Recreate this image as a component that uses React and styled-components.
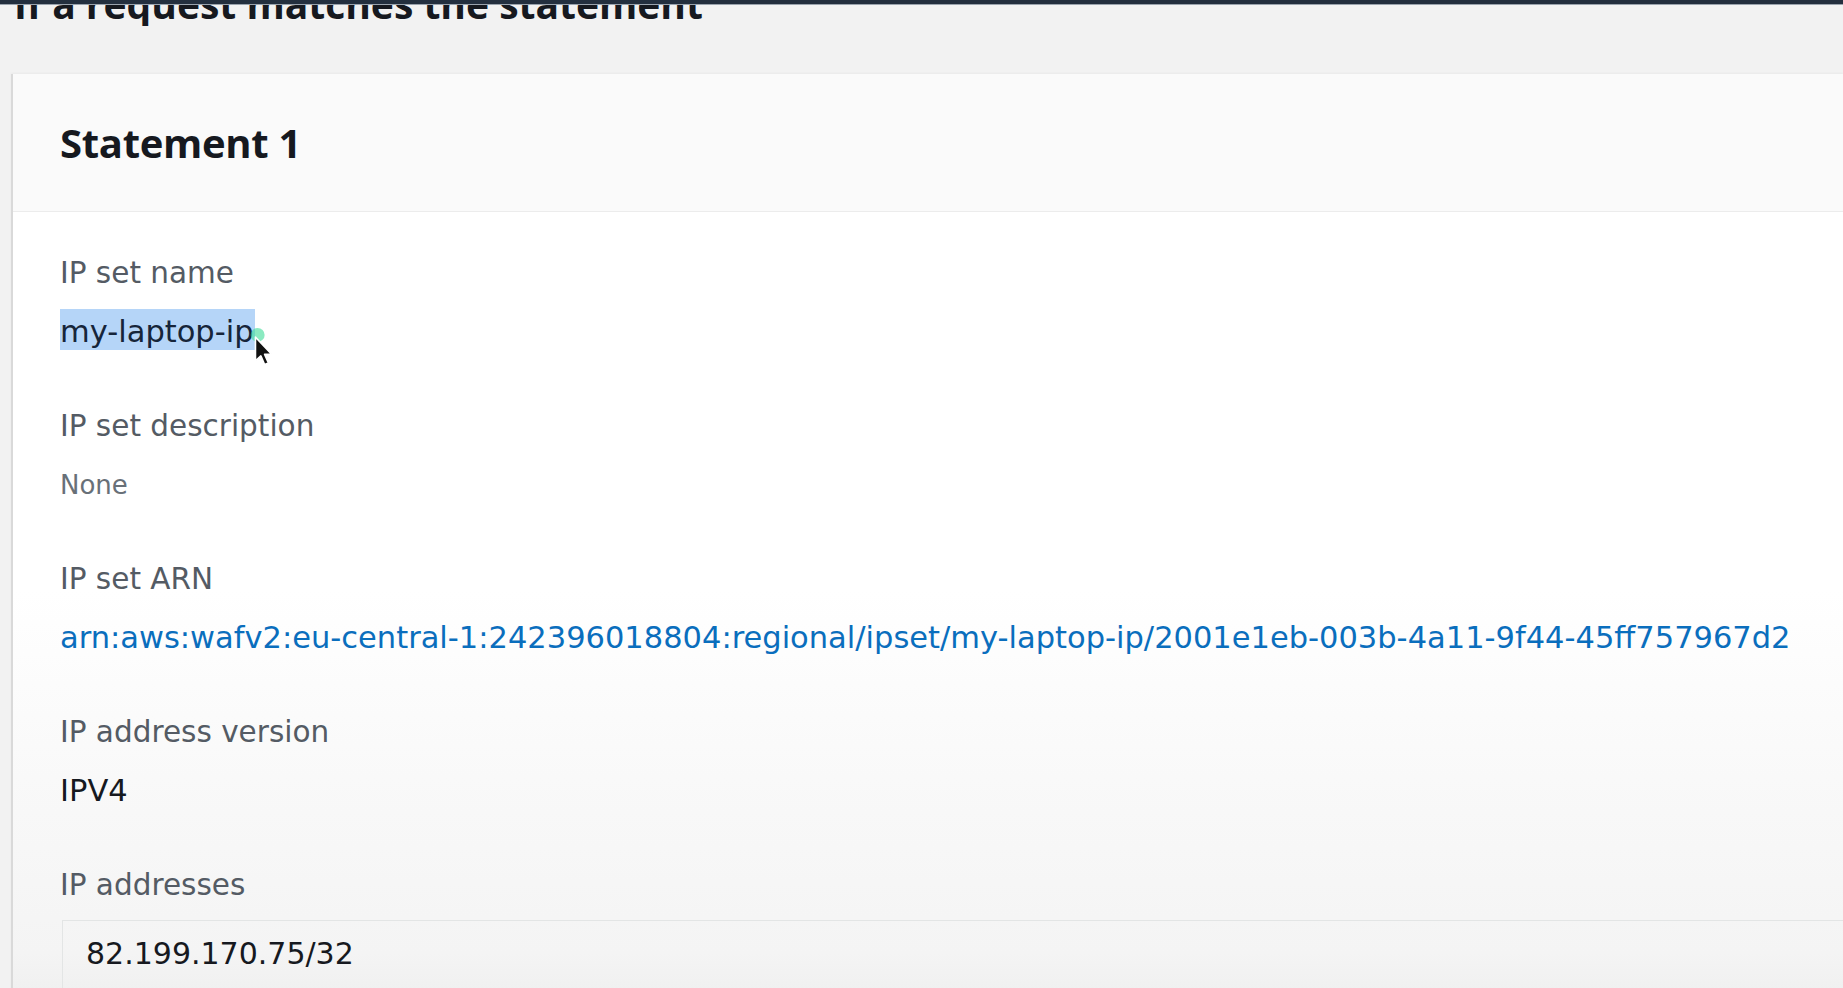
import React from "react";
import styled, { createGlobalStyle } from "styled-components";

const GlobalStyle = createGlobalStyle`
  html, body {
    margin: 0;
    padding: 0;
    background: #f2f2f2;
  }
  body {
    font-family: "DejaVu Sans", "Open Sans", sans-serif;
    color: #16191f;
  }
`;

const fields = [
  { label: "IP set name", value: "my-laptop-ip", kind: "selected" },
  { label: "IP set description", value: "None", kind: "muted" },
  {
    label: "IP set ARN",
    value:
      "arn:aws:wafv2:eu-central-1:242396018804:regional/ipset/my-laptop-ip/2001e1eb-003b-4a11-9f44-45ff757967d2",
    kind: "link",
  },
  { label: "IP address version", value: "IPV4", kind: "plain" },
];

const Page = styled.div`
  width: 1843px;
  height: 988px;
  overflow: hidden;
  background: #f2f2f2;
  display: flex;
  flex-direction: column;
`;

const TopBar = styled.div`
  height: 4px;
  flex-shrink: 0;
  background: #232f3e;
  border-bottom: 1px solid #9aa3ad;
`;

const HeadingClip = styled.div`
  height: 21px;
  flex-shrink: 0;
  overflow: hidden;
  display: flex;
  align-items: flex-end;
  padding-left: 14px;
`;

const PageHeading = styled.h2`
  margin: 0;
  font-family: "Open Sans", sans-serif;
  font-size: 39px;
  line-height: 39px;
  font-weight: 700;
  color: #16191f;
  white-space: nowrap;
  transform: translateY(-3px);
`;

const Card = styled.section`
  margin: 48px 0 0 11px;
  flex: 1;
  border-left: 2px solid #d9d9d9;
  background: linear-gradient(
    to bottom,
    #ffffff 0%,
    #ffffff 50%,
    #f9f9f9 68%,
    #f4f4f4 85%,
    #e4e4e4 100%
  );
  box-shadow: 0 -1px 2px rgba(0, 0, 0, 0.04);
  display: flex;
  flex-direction: column;
`;

const CardHeader = styled.header`
  height: 138px;
  flex-shrink: 0;
  box-sizing: border-box;
  display: flex;
  align-items: center;
  padding-left: 47px;
  background: #fafafa;
  border-bottom: 1px solid #ececec;
`;

const CardTitle = styled.h3`
  margin: 0;
  font-family: "Open Sans", sans-serif;
  font-size: 40px;
  font-weight: 700;
  color: #16191f;
  letter-spacing: -0.3px;
`;

const CardBody = styled.div`
  padding: 41px 0 0 47px;
  display: flex;
  flex-direction: column;
`;

const Field = styled.div`
  display: flex;
  flex-direction: column;
  gap: ${(p) => p.$gap || 19}px;
  margin-bottom: 54px;
`;

const Label = styled.div`
  font-size: 29.5px;
  line-height: 40px;
  color: #545b64;
`;

const Value = styled.div`
  font-size: ${(p) => (p.$kind === "muted" ? "26px" : "30.5px")};
  line-height: 40px;
  color: ${(p) =>
    p.$kind === "link" ? "#0a6ebd" : p.$kind === "muted" ? "#687078" : "#16191f"};
  white-space: nowrap;
`;

const Selected = styled.span`
  position: relative;
  background: #b5d5f8;
  color: #16253a;
  padding: 5px 1px 1px 0;
`;

const Pointer = styled.svg`
  position: absolute;
  left: calc(100% - 6px);
  top: 21px;
  width: 28px;
  height: 40px;
  overflow: visible;
`;

const AddressBox = styled.div`
  margin-left: 2px;
  border-top: 1px solid #e3e5e5;
  border-left: 1px solid #e3e5e5;
  padding: 13px 0 0 23px;
  height: 120px;
  font-size: 30px;
  line-height: 40px;
  color: #16191f;
`;

function FieldValue({ kind, value }) {
  if (kind === "selected") {
    return (
      <Value $kind={kind}>
        <Selected>
          {value}
          <Pointer viewBox="0 0 26 36">
            <circle cx="8" cy="4" r="6.5" fill="#3ddc97" opacity="0.6" />
            <path
              d="M6 6 L6 28 L11 23.5 L14.5 31.5 L18 30 L14.5 22 L21 22 Z"
              fill="#111"
              stroke="#fff"
              strokeWidth="1.5"
              strokeLinejoin="round"
            />
          </Pointer>
        </Selected>
      </Value>
    );
  }
  return <Value $kind={kind}>{value}</Value>;
}

export default function App() {
  return (
    <>
      <GlobalStyle />
      <Page>
        <TopBar />
        <HeadingClip>
          <PageHeading>If a request matches the statement</PageHeading>
        </HeadingClip>
        <Card>
          <CardHeader>
            <CardTitle>Statement 1</CardTitle>
          </CardHeader>
          <CardBody>
            {fields.map((f) => (
              <Field key={f.label}>
                <Label>{f.label}</Label>
                <FieldValue kind={f.kind} value={f.value} />
              </Field>
            ))}
            <Field $gap={15}>
              <Label>IP addresses</Label>
              <AddressBox>82.199.170.75/32</AddressBox>
            </Field>
          </CardBody>
        </Card>
      </Page>
    </>
  );
}
